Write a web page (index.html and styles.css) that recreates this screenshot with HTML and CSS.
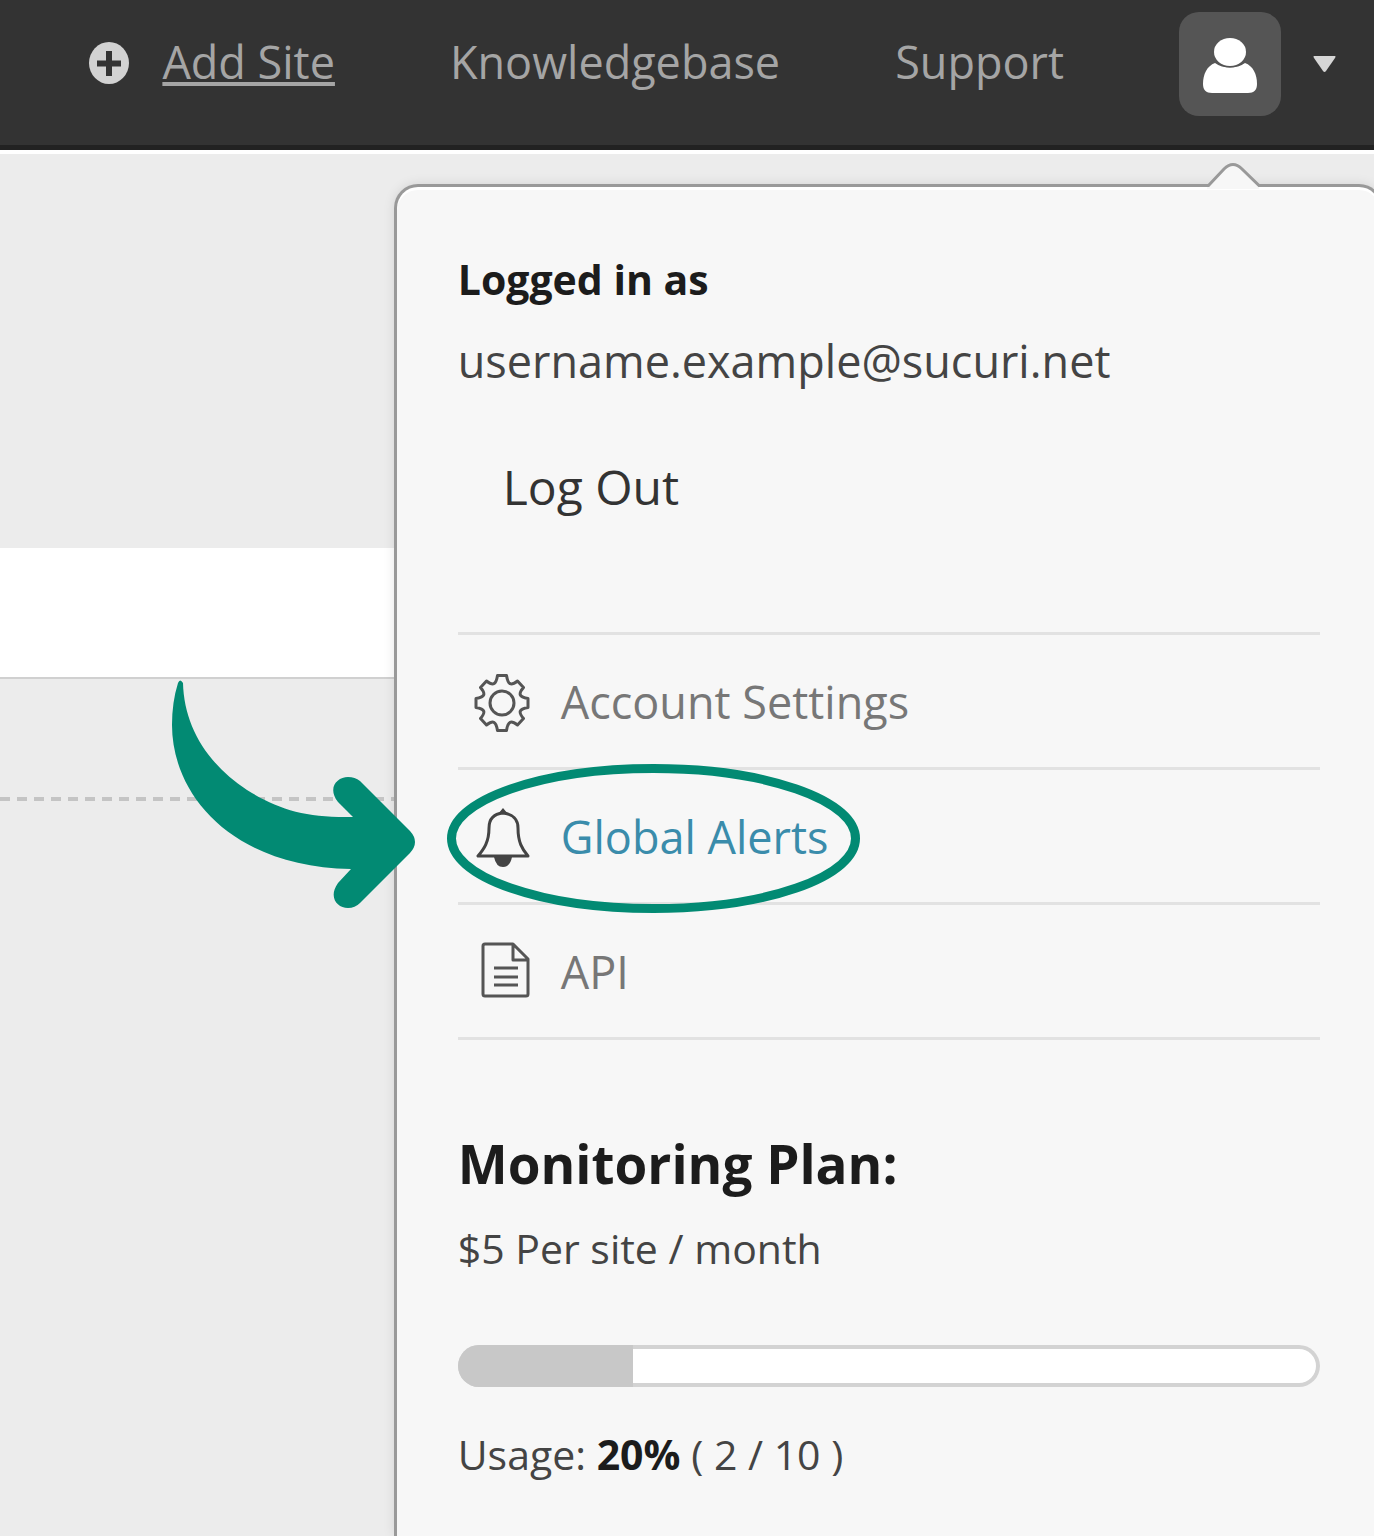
FILE: index.html
```html
<!DOCTYPE html>
<html lang="en">
<head>
<meta charset="utf-8">
<meta name="viewport" content="width=device-width, initial-scale=1">
<title>Global Alerts</title>
<link rel="stylesheet" href="styles.css">
</head>
<body>
<header class="topbar">
  <nav class="topnav" aria-label="Main">
    <a class="add-site" href="#add">
      <svg class="add-icon" width="40" height="42" viewBox="0 0 40 42" aria-hidden="true">
        <ellipse cx="20" cy="21" rx="20" ry="21"/>
        <path d="M20 9v25M8 21.500h24"/>
      </svg>
      <span class="add-label">Add Site</span>
    </a>
    <a href="#kb">Knowledgebase</a>
    <a href="#support">Support</a>
  </nav>
  <div class="account">
    <button class="avatar" type="button" aria-label="Account">
      <svg width="54" height="56" viewBox="0 0 54 56" aria-hidden="true">
        <path d="M12 25C4 28 0 36 0 46c0 6 3 9 9 9h36c6 0 9-3 9-9 0-10-4-18-12-21-8 6-22 6-30 0z"/>
        <ellipse class="head" cx="27" cy="14" rx="16" ry="14"/>
      </svg>
    </button>
    <button class="caret" type="button" aria-label="Open account menu">
      <svg width="23" height="16" viewBox="0 0 23 16" aria-hidden="true"><path d="M1 0h21q1 0 0 2l-9 13q-1.500 2-3 0L1 2Q0 0 1 0z"/></svg>
    </button>
  </div>
</header>

<div class="workspace">
  <main class="page">
    <div class="band"></div>
    <div class="dashes"></div>
  </main>

  <aside class="panel" aria-label="Account menu">
    <svg class="notch" width="58" height="28" viewBox="0 0 58 28" aria-hidden="true">
      <path class="notch-fill" d="M2 25L19 8Q28 -1 37 8L54 25V28H2z"/>
      <path class="notch-line" d="M0 24.500H3.500L19 8Q28 -1 37 8L54 24.500H58"/>
    </svg>
    <p class="line strong">Logged in as</p>
    <p class="email">username.example@sucuri.net</p>
    <button class="logout" type="button">Log Out</button>

    <ul class="menu">
      <li>
        <a href="#settings">
          <svg class="icon" width="60" height="60" viewBox="0 0 60 60" aria-hidden="true">
            <g transform="translate(30 32)">
              <path d="M-4.500 -27.500H4.500C6 -18 9 -17 15.500 -22L21.500 -15.500C16 -9 17 -6 26 -4.500V4.500C17 6 16 9 21.500 15.500L15.500 22C9 17 6 18 4.500 27.500H-4.500C-6 18 -9 17 -15.500 22L-21.500 15.500C-16 9 -17 6 -26 4.500V-4.500C-17 -6 -16 -9 -21.500 -15.500L-15.500 -22C-9 -17 -6 -18 -4.500 -27.500z"/>
              <circle r="12"/>
            </g>
          </svg>
          <span>Account Settings</span>
        </a>
      </li>
      <li class="active">
        <a href="#alerts">
          <svg class="icon" width="60" height="60" viewBox="0 0 60 60" aria-hidden="true">
            <path d="M31 7C21 8 17 14 17 22C17 36 12 43 6 50H56C50 43 46 36 46 22C46 14 41 8 31 7z"/>
            <path class="solid" d="M31 2l5 6h-10zM22 51h18q-2 10-9 10t-9-10z"/>
          </svg>
          <span>Global Alerts</span>
        </a>
        <svg class="ring" width="413" height="149" viewBox="0 0 413 149" aria-hidden="true"><ellipse cx="206.500" cy="74.500" rx="202" ry="70"/></svg>
        <svg class="arrow" width="243" height="229" viewBox="0 0 243 229" aria-hidden="true">
          <path d="M11 3C12 45 34 83 75 110C107 130 135 138 181 137L166 122C155 108 165 97 176 97Q183 97 188 101L238 151Q248 162 238 173L188 223Q183 228 176 228C165 228 156 217 166 203L179 189C60 187 0 115 0 45Q0 22 6 3Q8 -2 11 3z"/>
        </svg>
      </li>
      <li>
        <a href="#api">
          <svg class="icon" width="60" height="60" viewBox="0 0 60 60" aria-hidden="true">
            <path d="M13 3H41L56 18V53Q56 55 54 55H13Q11 55 11 53V5Q11 3 13 3zM41 3V19H56M22 27H46M22 36H46M22 44H46"/>
          </svg>
          <span>API</span>
        </a>
      </li>
    </ul>

    <h2 class="plan">Monitoring Plan:</h2>
    <p class="line">$5 Per site / month</p>
    <div class="meter" role="progressbar" aria-label="Usage" aria-valuenow="20" aria-valuemin="0" aria-valuemax="100"><div class="meter-fill" style="width: 20%"></div></div>
    <p class="line">Usage: <b>20%</b> ( 2 / 10 )</p>
  </aside>
</div>
</body>
</html>
```
FILE: styles.css
```css
* { box-sizing: border-box; }

body {
  display: flex;
  flex-direction: column;
  min-height: 100vh;
  margin: 0;
  overflow-x: hidden;
  background: #ececec;
  color: #444;
  font-family: "Open Sans", "Noto Sans", sans-serif;
  font-size: 41px;
}

button {
  padding: 0;
  border: 0;
  background: none;
  color: inherit;
  font: inherit;
  cursor: pointer;
}

a { color: inherit; text-decoration: none; }
p, h2, ul { margin: 0; padding: 0; }
svg { display: block; }

/* Top bar */
.topbar {
  display: flex;
  align-items: flex-start;
  justify-content: flex-end;
  gap: 115px;
  height: 150px;
  padding: 12px 38px 0 0;
  border-bottom: 5px solid #222;
  background: #333;
  color: #a5a5a5;
}

.topnav {
  display: flex;
  align-items: center;
  gap: 115px;
  height: 100px;
  font-size: 45px;
  line-height: 60px;
  white-space: nowrap;
}

.add-site { display: flex; align-items: center; gap: 33px; }
.add-icon { margin-top: 2px; fill: #d2d2d2; stroke: #333; stroke-width: 6px; }
.add-icon ellipse { stroke: none; }
.add-label {
  text-decoration: underline;
  text-decoration-thickness: 4px;
  text-underline-offset: 3px;
  text-decoration-skip-ink: none;
}

.account { display: flex; align-items: center; gap: 32px; }
.avatar {
  display: grid;
  place-items: center;
  width: 102px;
  height: 104px;
  border-radius: 20px;
  background: #555;
}
.avatar svg { margin-top: 4px; fill: #fff; overflow: visible; }
.avatar .head { stroke: #555; stroke-width: 3px; paint-order: stroke; }
.caret svg { fill: #d6d6d6; }

/* Page behind the menu; both share one grid cell */
.workspace {
  display: grid;
  flex: 1;
  border-top: 4px solid #fff;
}
.page, .panel { grid-area: 1 / 1; }
.page { padding-top: 394px; }
.band {
  height: 131px;
  border-bottom: 2px solid #d0d0d0;
  background: #fff;
}
.dashes {
  height: 4px;
  margin-top: 118px;
  background: repeating-linear-gradient(90deg, #c4c4c4 0 10px, transparent 10px 17px);
}

/* Account menu */
.panel {
  position: relative;
  justify-self: end;
  width: 72%;
  margin: 30px -9px 0 0;
  padding: 50px 60px 36px 61px;
  border: 3px solid #999;
  border-bottom: 0;
  border-radius: 24px 24px 0 0;
  background: #f7f7f7;
  box-shadow: 0 0 12px rgba(0, 0, 0, 0.1), inset 0 3px 0 #fff;
}
.notch { position: absolute; top: -26px; right: 117px; }
.notch-fill { fill: #f7f7f7; }
.notch-line { fill: none; stroke: #999; stroke-width: 3px; }

.line { line-height: 84px; }
.strong, .line b { color: #1c1c1c; font-weight: 700; }
.email { font-size: 45px; line-height: 80px; }

.logout {
  display: block;
  margin: 44px 0 103px 45px;
  color: #333;
  font-size: 48px;
  line-height: 84px;
}

.menu { border-bottom: 3px solid #e2e2e2; list-style: none; }
.menu li { position: relative; border-top: 3px solid #e2e2e2; }
.menu a {
  display: flex;
  align-items: center;
  gap: 29px;
  height: 132px;
  padding-left: 14px;
  color: #777;
  font-size: 45px;
}
.menu .active { z-index: 1; }
.menu .active a { color: #3a8cab; }
.icon {
  overflow: visible;
  fill: none;
  stroke: #555;
  stroke-width: 3px;
  stroke-linejoin: round;
}
.icon .solid { fill: #444; stroke: none; }
.active .icon { stroke: #444; }

.ring {
  position: absolute;
  top: -6px;
  left: -11px;
  fill: none;
  stroke: #028a73;
  stroke-width: 9px;
  pointer-events: none;
}
.arrow {
  position: absolute;
  top: -90px;
  left: -286px;
  overflow: visible;
  fill: #028a73;
  pointer-events: none;
}

.plan {
  margin-top: 82px;
  color: #1c1c1c;
  font-size: 53px;
  font-weight: 700;
  line-height: 84px;
}

.meter {
  height: 42px;
  margin: 55px 0 25px;
  overflow: hidden;
  border-radius: 21px;
  background: #fff;
  box-shadow: inset 0 0 0 4px #d3d3d3;
}
.meter-fill {
  box-sizing: content-box;
  height: 100%;
  padding-right: 3px;
  background: #c8c8c8;
}
```
